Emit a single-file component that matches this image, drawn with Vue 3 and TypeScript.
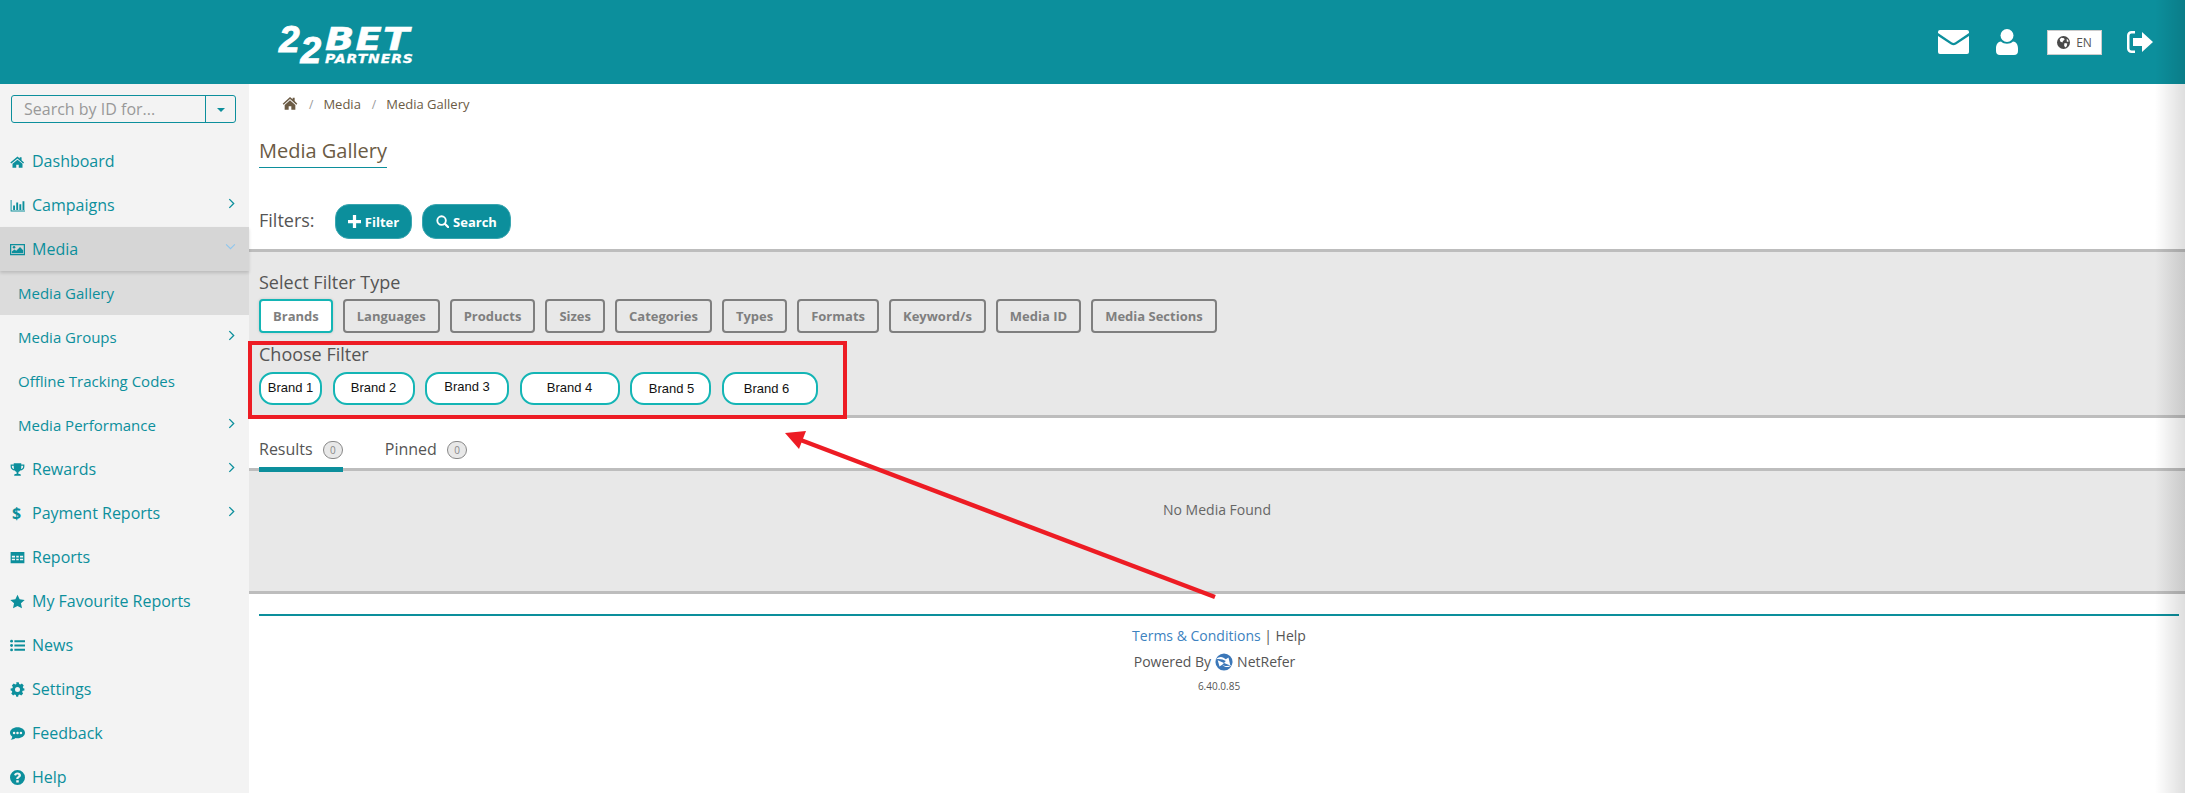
<template>
  <div class="page">
    <header class="topbar">
      <div class="logo">
        <div class="logo-num"><span>2</span><span class="second">2</span></div>
        <div class="logo-text">
          <div class="logo-bet">BET</div>
          <div class="logo-partners">PARTNERS</div>
        </div>
      </div>
      <div class="top-actions">
        <svg class="ic-mail" viewBox="0 0 31 24"><path d="M2 0h27a2 2 0 0 1 2 2v1L17 12.500a3 3 0 0 1-3 0L0 3V2a2 2 0 0 1 2-2z" fill="#fff"/><path d="M0 6l13 8.500a4.500 4.500 0 0 0 5 0L31 6v16a2 2 0 0 1-2 2H2a2 2 0 0 1-2-2z" fill="#fff"/></svg>
        <svg class="ic-user" viewBox="0 0 22 26"><circle cx="11" cy="6.500" r="6.500" fill="#fff"/><path d="M5 12.500c3 3 9 3 12 0 3 0 5 3 5 7V22a4 4 0 0 1-4 4H4a4 4 0 0 1-4-4v-2.500c0-4 2-7 5-7z" fill="#fff"/></svg>
        <div class="lang">
          <svg viewBox="0 0 24 24" class="ic-globe"><circle cx="12" cy="12" r="12" fill="#4a4a4a"/><path d="M8 3l5 1 1 3-3 2-1 3-4-2-1-4zM14 13l5 1-1 5-3 2-2-4zM18 5l3 3 0 3-3-1z" fill="#fff"/></svg>
          <span>EN</span>
        </div>
        <svg class="ic-out" viewBox="0 0 26 22"><path d="M8 0H4.500A4.500 4.500 0 0 0 0 4.500v13A4.500 4.500 0 0 0 4.500 22H8v-2.500H4.500a2 2 0 0 1-2-2v-13a2 2 0 0 1 2-2H8z" fill="#fff"/><path d="M6 7h9V1l11 10-11 10v-6H6z" fill="#fff"/></svg>
      </div>
    </header>

    <div class="body">
      <aside class="sidebar">
        <div class="search-box">
          <span class="search-text">Search by ID for...</span>
          <span class="search-caret"><i></i></span>
        </div>
        <nav class="menu">
          <div
            v-for="item in menu"
            :key="item.label"
            class="menu-row"
            :class="{ open: item.open, active: item.active, sub: item.sub }"
          >
            <svg v-if="item.icon" class="menu-icon" viewBox="0 0 24 24" v-html="icons[item.icon]"></svg>
            <span v-if="item.dollar" class="menu-dollar">$</span>
            <span class="menu-label">{{ item.label }}</span>
            <svg v-if="item.arrow" class="chev" viewBox="0 0 8 12"><path d="M1.500 1l5 5-5 5" fill="none" stroke="currentColor" stroke-width="1.500"/></svg>
            <svg v-if="item.open" class="chev-down" viewBox="0 0 12 8"><path d="M1 1.500l5 5 5-5" fill="none" stroke="currentColor" stroke-width="1.200"/></svg>
          </div>
        </nav>
      </aside>

      <main class="content">
        <div class="crumbs">
          <svg class="crumb-home" viewBox="0 0 24 24"><path d="M12 3l4 3.500V4h3v5l4 4-1.500 1.500L12 6 2.500 14.500 1 13z" fill="#6b5b45"/><path d="M12 8l8 7v7h-6v-5h-4v5H4v-7z" fill="#6b5b45"/></svg>
          <span class="slash">/</span>
          <span>Media</span>
          <span class="slash">/</span>
          <span>Media Gallery</span>
        </div>
        <h1 class="title"><span>Media Gallery</span></h1>

        <div class="filters-row">
          <span class="filters-label">Filters:</span>
          <button class="round-btn filter-btn">
            <svg viewBox="0 0 12 12"><path d="M4.500 0h3v4.500H12v3H7.500V12h-3V7.500H0v-3h4.500z" fill="#fff"/></svg>
            Filter
          </button>
          <button class="round-btn search-btn">
            <svg viewBox="0 0 14 14"><circle cx="6" cy="6" r="4.600" fill="none" stroke="#fff" stroke-width="2"/><path d="M9.500 9.500L13 13" stroke="#fff" stroke-width="2.400" stroke-linecap="round"/></svg>
            Search
          </button>
        </div>

        <section class="filter-panel">
          <div class="panel-heading">Select Filter Type</div>
          <div class="type-list">
            <button v-for="(t, i) in filterTypes" :key="t" class="type-btn" :class="{ selected: i === 0 }">{{ t }}</button>
          </div>
          <div class="panel-heading choose">Choose Filter</div>
          <div class="brand-list">
            <button
              v-for="b in brands"
              :key="b.name"
              class="brand-btn"
              :style="{ width: b.width + 'px' }"
            ><span :style="{ transform: `translate(${b.dx}px, ${b.dy}px)` }">{{ b.name }}</span></button>
          </div>
        </section>

        <div class="tabs">
          <div class="tab active">Results <span class="count">0</span></div>
          <div class="tab">Pinned <span class="count">0</span></div>
        </div>
        <section class="results">No Media Found</section>

        <footer class="footer">
          <div class="foot-links"><a>Terms &amp; Conditions</a> | Help</div>
          <div class="powered">
            Powered By
            <svg viewBox="0 0 20 20" class="nr-logo"><circle cx="10" cy="10" r="9.500" fill="#3b77b8"/><path d="M1 7c4-4 8-3 11 0l3-2 2 9-7-3 2-2C9 7 5 6 1 7zM19 13c-4 4-8 3-11 0l-3 2-2-7 7 3-2 2c3 2 7 2 11 0z" fill="#fff"/></svg>
            NetRefer
          </div>
          <div class="version">6.40.0.85</div>
        </footer>
      </main>
    </div>

    <!-- annotation drawn over the screenshot -->
    <div class="red-box"></div>
    <svg class="arrow" viewBox="0 0 2185 793" width="2185" height="793">
      <line x1="1215" y1="597" x2="798" y2="439" stroke="#ed1c24" stroke-width="4.500" />
      <polygon points="785,433 806,431 799,449" fill="#ed1c24" />
    </svg>
    <div class="edge-shade"></div>
  </div>
</template>

<script setup lang="ts">
interface MenuItem {
  label: string
  icon?: string
  dollar?: boolean
  arrow?: boolean
  open?: boolean
  active?: boolean
  sub?: boolean
}

const icons: Record<string, string> = {
  home: '<path d="M12 4l3.500 3V5h3v5l4 3.500-1.500 1.700L12 7 2 15.200.5 13.500z" fill="currentColor"/><path d="M12 9l8 6.500V22h-6v-5h-4v5H4v-6.500z" fill="currentColor"/>',
  chart: '<path d="M1 3h1.500v17H24v1.500H1z" fill="currentColor"/><path d="M5 12h3v7H5zM10 7h3v12h-3zM15 10h3v9h-3zM20 5h3v14h-3z" fill="currentColor"/>',
  picture: '<path fill-rule="evenodd" d="M0 3h24v18H0zM2 5v14h20V5z" fill="currentColor"/><circle cx="6.500" cy="8.500" r="2" fill="currentColor"/><path d="M3 18v-3l4-3 3 2 6-6 5 5v5z" fill="currentColor"/>',
  trophy: '<path d="M6 2h12v2h5v3c0 4-3 6-6.500 6.500-1 1.500-2 2-3 2.500v3h3l1 3H6.500l1-3h3v-3c-1-.5-2-1-3-2.500C4 13 1 11 1 7V4h5zM3 6v1c0 2.500 1.500 3.800 3.500 4.300C6 9.500 6 8 6 6zm18 0h-3c0 2 0 3.500-.5 5.300C19.500 10.800 21 9.500 21 7z" fill="currentColor"/>',
  table: '<path fill-rule="evenodd" d="M1 3h22v18H1zM3 9v3h5V9zm7 0v3h4V9zm6 0v3h5V9zM3 14v2.500h5V14zm7 0v2.500h4V14zm6 0v2.500h5V14z" fill="currentColor"/>',
  star: '<path d="M12 1l3.400 7.500 8.100.9-6 5.500 1.700 8L12 19l-7.200 3.900 1.700-8-6-5.500 8.100-.9z" fill="currentColor"/>',
  list: '<circle cx="2.500" cy="5" r="2.300" fill="currentColor"/><circle cx="2.500" cy="12" r="2.300" fill="currentColor"/><circle cx="2.500" cy="19" r="2.300" fill="currentColor"/><path d="M7 3.500h17v3.200H7zM7 10.400h17v3.200H7zM7 17.300h17v3.200H7z" fill="currentColor"/>',
  cog: '<path fill-rule="evenodd" d="M10 2h4l.6 2.800 2 .8L19 4l3 3-1.600 2.400.8 2L23 12v3l-2.800.6-.8 2L21 20l-3 3-2.400-1.600-2 .8L13 25h-3l-.6-2.800-2-.8L5 23l-3-3 1.600-2.400-.8-2L1 15v-3l2.800-.6.8-2L3 7l3-3 2.400 1.600 2-.8zM12 9.500a4 4 0 1 0 0 8 4 4 0 0 0 0-8z" fill="currentColor" transform="translate(0 -1.500)"/>',
  comment: '<path fill-rule="evenodd" d="M12 2c6.600 0 12 3.900 12 8.800s-5.400 8.800-12 8.800c-1 0-2-.1-3-.3C7 21 4 22 1 22c1.500-1.500 2.500-3.200 2.700-5C1.400 15.400 0 13.200 0 10.800 0 5.900 5.400 2 12 2zM6.500 9a2 2 0 1 0 0 4 2 2 0 0 0 0-4zm5.500 0a2 2 0 1 0 0 4 2 2 0 0 0 0-4zm5.500 0a2 2 0 1 0 0 4 2 2 0 0 0 0-4z" fill="currentColor"/>',
  help: '<path fill-rule="evenodd" d="M12 0a12 12 0 1 1 0 24 12 12 0 0 1 0-24zm-2 16.500V20h4v-3.500zM12 4C9 4 7 5.500 6.500 8l3.200 1c.3-1.300 1-2 2.200-2 1 0 1.800.6 1.800 1.500 0 .8-.6 1.300-1.500 1.900-1.400 1-2.200 2-2.200 3.600v.5h3.500c0-1 .4-1.400 1.400-2 1.500-1 2.600-2.200 2.600-4.100C17.500 5.600 15 4 12 4z" fill="currentColor"/>',
}

const menu: MenuItem[] = [
  { label: 'Dashboard', icon: 'home' },
  { label: 'Campaigns', icon: 'chart', arrow: true },
  { label: 'Media', icon: 'picture', open: true },
  { label: 'Media Gallery', sub: true, active: true },
  { label: 'Media Groups', sub: true, arrow: true },
  { label: 'Offline Tracking Codes', sub: true },
  { label: 'Media Performance', sub: true, arrow: true },
  { label: 'Rewards', icon: 'trophy', arrow: true },
  { label: 'Payment Reports', dollar: true, arrow: true },
  { label: 'Reports', icon: 'table' },
  { label: 'My Favourite Reports', icon: 'star' },
  { label: 'News', icon: 'list' },
  { label: 'Settings', icon: 'cog' },
  { label: 'Feedback', icon: 'comment' },
  { label: 'Help', icon: 'help' },
]

const filterTypes = ['Brands', 'Languages', 'Products', 'Sizes', 'Categories', 'Types', 'Formats', 'Keyword/s', 'Media ID', 'Media Sections']

// the pills in the reference are hand-pasted, so each has its own width and text nudge
const brands = [
  { name: 'Brand 1', width: 63, dx: 0, dy: -1 },
  { name: 'Brand 2', width: 82, dx: 0, dy: -1 },
  { name: 'Brand 3', width: 84, dx: 0, dy: -2 },
  { name: 'Brand 4', width: 100, dx: 0, dy: -1 },
  { name: 'Brand 5', width: 81, dx: 1, dy: 0 },
  { name: 'Brand 6', width: 96, dx: -3, dy: 0 },
]
</script>

<style>
html, body {
  margin: 0;
  background: #fff;
}
</style>

<style scoped>
.page {
  position: relative;
  width: 2185px;
  height: 793px;
  overflow: hidden;
  font-family: "Open Sans", "Noto Sans", sans-serif;
  color: #555;
}

.topbar {
  height: 84px;
  background: #0c8f9c;
  display: flex;
  align-items: center;
  justify-content: space-between;
  padding: 0 32px 0 279px;
}
.logo {
  display: flex;
  color: #fff;
  font-family: "Liberation Sans", sans-serif;
  font-weight: 700;
  font-style: italic;
  gap: 3px;
  height: 38px;
  margin-top: 7px;
}
.logo-num {
  display: flex;
  font-size: 37px;
  line-height: 26px;
  width: 43px;
  gap: 1px;
  -webkit-text-stroke: 1px #fff;
}
.logo-num .second {
  margin-top: 11px;
}
.logo-bet {
  font-family: "DejaVu Sans", sans-serif;
  font-size: 32px;
  line-height: 25px;
  letter-spacing: 1px;
  transform: scaleX(1.2);
  transform-origin: left top;
  height: 26px;
  -webkit-text-stroke: 0.5px #fff;
}
.logo-partners {
  font-size: 12.500px;
  line-height: 12px;
  letter-spacing: 0.800px;
  font-family: "DejaVu Sans", sans-serif;
  font-weight: 700;
  transform: scaleX(1.12);
  transform-origin: left top;
  -webkit-text-stroke: 0.3px #fff;
}
.top-actions {
  display: flex;
  align-items: center;
}
.ic-mail { width: 31px; height: 24px; margin-right: 27px; }
.ic-user { width: 22px; height: 26px; margin-right: 29px; }
.lang {
  width: 55px;
  height: 25px;
  box-sizing: border-box;
  background: #fff;
  border: 1px solid #ccc;
  display: flex;
  align-items: center;
  justify-content: center;
  gap: 6px;
  font-size: 12px;
  margin-right: 25px;
}
.ic-globe { width: 13px; height: 13px; }
.ic-out { width: 26px; height: 22px; }

.body {
  display: flex;
  height: 709px;
}
.sidebar {
  width: 249px;
  flex: none;
  background: #f3f3f3;
  padding-top: 11px;
  box-sizing: border-box;
}
.search-box {
  margin-left: 11px;
  width: 225px;
  height: 28px;
  box-sizing: border-box;
  border: 1px solid #0c8f9c;
  border-radius: 3px;
  display: flex;
  font-size: 16px;
  line-height: 26px;
  color: #999;
}
.search-text {
  flex: 1;
  padding-left: 12px;
}
.search-caret {
  width: 29px;
  border-left: 1px solid #0c8f9c;
  display: flex;
  align-items: center;
  justify-content: center;
}
.search-caret i {
  border: 4px solid transparent;
  border-top-color: #0c8f9c;
  border-bottom: 0;
  margin-top: 2px;
}
.menu {
  margin-top: 16px;
}
.menu-row {
  height: 44px;
  display: flex;
  align-items: center;
  position: relative;
  font-size: 16px;
  color: #0c8f9c;
  padding-left: 32px;
  box-sizing: border-box;
}
.menu-row.sub {
  padding-left: 18px;
  font-size: 15px;
}
.menu-row.open {
  background: #d6d6d6;
  box-shadow: 0 2px 3px rgba(0, 0, 0, 0.15);
  z-index: 1;
}
.menu-row.active {
  background: #dcdcdc;
}
.menu-icon {
  position: absolute;
  left: 10px;
  width: 15px;
  height: 15px;
}
.menu-dollar {
  position: absolute;
  left: 12px;
  font-weight: 700;
  font-size: 16px;
}
.chev {
  position: absolute;
  right: 14px;
  top: 15px;
  width: 7px;
  height: 11px;
}
.chev-down {
  position: absolute;
  right: 13px;
  top: 16px;
  width: 11px;
  height: 7px;
  color: #8ec6ee;
}

.content {
  flex: 1;
  min-width: 0;
}
.crumbs {
  display: flex;
  align-items: center;
  font-size: 13px;
  color: #6b5b45;
  padding-left: 33px;
  height: 40px;
  margin-bottom: 14px;
}
.crumb-home {
  width: 16px;
  height: 16px;
  margin-top: -3px;
}
.slash {
  color: #999;
  margin: 0 10px 0 11px;
  font-size: 12px;
}
.title {
  margin: 0 0 0 10px;
  font-weight: 400;
  font-size: 20px;
  line-height: 26px;
  color: #6b5b45;
  height: 31px;
}
.title span {
  display: inline-block;
  padding: 0 0 3px;
  border-bottom: 1px solid #0c8f9c;
}
.filters-row {
  display: flex;
  align-items: center;
  padding-left: 10px;
  height: 35px;
  margin-top: 35px;
  margin-bottom: 10px;
  font-size: 18px;
}
.filters-label {
  color: #555;
  width: 76px;
  margin-top: -4px;
}
.round-btn {
  height: 35px;
  border: 1px solid #3aa6b0;
  border-radius: 14px;
  background: #0c8f9c;
  color: #fff;
  font-family: inherit;
  font-weight: 700;
  font-size: 13px;
  display: flex;
  align-items: center;
  gap: 4px;
  padding: 0;
  justify-content: center;
}
.round-btn svg { width: 13px; height: 13px; }
.filter-btn { width: 77px; margin-right: 10px; }
.search-btn { width: 89px; }

.filter-panel {
  border-top: 3px solid #bdbdbd;
  border-bottom: 3px solid #bdbdbd;
  background: #e8e8e8;
  height: 169px;
  box-sizing: border-box;
  padding: 18px 0 0 10px;
}
.panel-heading {
  font-size: 18px;
  line-height: 24px;
  color: #555;
}
.type-list {
  display: flex;
  gap: 10px;
  margin-top: 5px;
}
.type-btn {
  height: 34px;
  box-sizing: border-box;
  border: 2px solid #7f7f7f;
  border-radius: 4px;
  background: transparent;
  color: #7f7f7f;
  font-family: inherit;
  font-weight: 700;
  font-size: 13px;
  padding: 0 12px;
}
.type-btn.selected {
  background: #fff;
  border-color: #14b5b5;
  box-shadow: 0 0 3px rgba(0, 0, 0, 0.15);
}
.choose {
  margin-top: 9px;
}
.brand-list {
  display: flex;
  gap: 10.500px;
  margin-top: 6px;
}
.brand-btn {
  height: 33px;
  box-sizing: border-box;
  border: 2px solid #14b5b5;
  border-radius: 14px;
  background: #fff;
  padding: 0;
  color: #111;
  font-family: "Liberation Sans", sans-serif;
  font-size: 13px;
}
.brand-btn span {
  display: inline-block;
}

.tabs {
  display: flex;
  align-items: flex-start;
  height: 50px;
  padding-left: 10px;
  gap: 42px;
  position: relative;
}
.tab {
  font-size: 16px;
  line-height: 20px;
  padding-top: 21px;
  color: #555;
  box-sizing: border-box;
  white-space: nowrap;
  height: 54px;
}
.tab.active {
  border-bottom: 5px solid #0c8f9c;
}
.count {
  display: inline-block;
  width: 20px;
  height: 18px;
  box-sizing: border-box;
  border: 1px solid #888;
  border-radius: 9px;
  background: #e8e8e8;
  color: #888;
  font-size: 10px;
  line-height: 16px;
  text-align: center;
  margin-left: 6px;
  vertical-align: 1px;
}
.results {
  background: #e8e8e8;
  border-top: 3px solid #bdbdbd;
  border-bottom: 3px solid #bdbdbd;
  height: 126px;
  box-sizing: border-box;
  text-align: center;
  font-size: 14px;
  color: #666;
  padding-top: 29px;
}

.footer {
  margin: 20px 6px 0 10px;
  border-top: 2px solid #0c8f9c;
  text-align: center;
  padding-top: 10px;
  font-size: 14px;
  color: #555;
}
.foot-links {
  line-height: 20px;
}
.foot-links a {
  color: #3c82c0;
}
.powered {
  margin-top: 6px;
  line-height: 20px;
  display: flex;
  justify-content: center;
  align-items: center;
  gap: 4px;
  margin-right: 9px;
}
.nr-logo {
  width: 18px;
  height: 18px;
}
.version {
  font-size: 10px;
  line-height: 14px;
  margin-top: 7px;
}

/* annotation + edge shading sit over the page */
.red-box {
  position: absolute;
  left: 248px;
  top: 341px;
  width: 599px;
  height: 78px;
  box-sizing: border-box;
  border: 4px solid #ed1c24;
}
.arrow {
  position: absolute;
  left: 0;
  top: 0;
  pointer-events: none;
}
.edge-shade {
  position: absolute;
  right: 0;
  top: 0;
  width: 30px;
  height: 793px;
  background: linear-gradient(to right, rgba(0, 0, 0, 0), rgba(0, 0, 0, 0.13));
}
</style>
